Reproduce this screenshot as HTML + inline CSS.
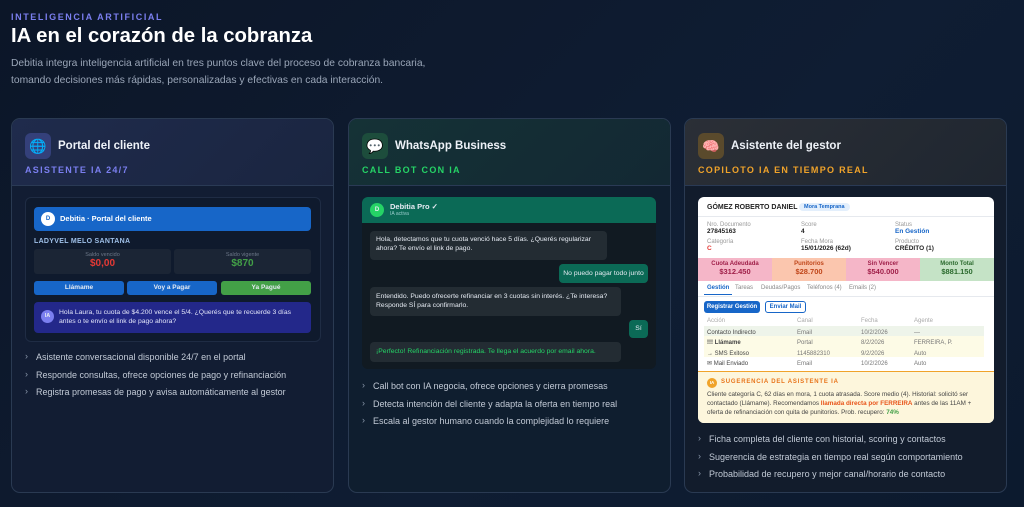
<!DOCTYPE html>
<html><head><meta charset="utf-8"><style>
*{box-sizing:border-box;margin:0;padding:0}
body{width:1024px;height:507px;overflow:hidden;background:linear-gradient(135deg,#0c1628,#0f1d33 60%,#0c1a2e);font-family:"Liberation Sans",sans-serif;color:#e6ebf3;position:relative}
.abs{position:absolute}
.kick{left:11px;top:12px;font-size:9px;letter-spacing:1.6px;font-weight:700;color:#7b7ff0}
h1{position:absolute;left:11px;top:25px;font-size:20.3px;font-weight:700;color:#fff}
.lead{left:11px;top:55px;font-size:10.3px;line-height:17px;color:#9aa6b8;width:470px}
.card{position:absolute;top:118px;width:323px;height:375px;border-radius:9px;border:1px solid #2a3a52;overflow:hidden;background:#111c30}
.head{height:67px;border-bottom:1px solid #2a3a55;position:relative}
.ic{position:absolute;left:13px;top:14px;width:26px;height:26px;border-radius:6px;font-size:14px;text-align:center;line-height:26px}
.tt{position:absolute;left:46px;top:21px;font-size:11.5px;font-weight:700;color:#eef2f8}
.sub{position:absolute;left:13px;top:46px;font-size:9px;font-weight:700;letter-spacing:1.3px}
ul{position:absolute;left:13px;list-style:none;font-size:9px;color:#c2cad6}
li{height:17.5px;position:relative;padding-left:11px}
li:before{content:"›";position:absolute;left:0;top:-1px;color:#8a97aa}
.box{position:absolute;border-radius:6px}
</style></head><body>
<div class="abs kick">INTELIGENCIA ARTIFICIAL</div>
<h1>IA en el corazón de la cobranza</h1>
<div class="abs lead">Debitia integra inteligencia artificial en tres puntos clave del proceso de cobranza bancaria,<br>tomando decisiones más rápidas, personalizadas y efectivas en cada interacción.</div>

<!-- card 1 -->
<div class="card" style="left:11px;background:#121d33">
 <div class="head" style="background:linear-gradient(135deg,#1f2b4c,#1a2540)">
  <div class="ic" style="background:#34407a">🌐</div>
  <div class="tt">Portal del cliente</div>
  <div class="sub" style="color:#7b7ff0">ASISTENTE IA 24/7</div>
 </div>
 <div class="box" style="left:13px;top:78px;width:296px;height:145px;border:1px solid #1f2c44;background:#0f1a2d">
  <div class="box" style="left:8px;top:9px;width:277px;height:24px;background:#1766c8;border-radius:4px">
   <div class="abs" style="left:7px;top:5px;width:14px;height:14px;border-radius:50%;background:#fff;color:#1766c8;font-size:6px;font-weight:700;text-align:center;line-height:14px">D</div>
   <div class="abs" style="left:26px;top:7px;font-size:7.5px;font-weight:700;color:#fff">Debitia · Portal del cliente</div>
  </div>
  <div class="abs" style="left:8px;top:40px;font-size:7px;font-weight:700;color:#9fc0e8;letter-spacing:.3px">LADYVEL MELO SANTANA</div>
  <div class="box" style="left:8px;top:51px;width:137px;height:25px;background:#1b2535;border-radius:3px;text-align:center"><div style="font-size:5.5px;color:#6d7889;margin-top:3px">Saldo vencido</div><div style="font-size:10px;font-weight:700;color:#e53935">$0,00</div></div>
  <div class="box" style="left:148px;top:51px;width:137px;height:25px;background:#1b2535;border-radius:3px;text-align:center"><div style="font-size:5.5px;color:#6d7889;margin-top:3px">Saldo vigente</div><div style="font-size:10px;font-weight:700;color:#43a047">$870</div></div>
  <div class="box" style="left:8px;top:83px;width:90px;height:14px;background:#1766c8;border-radius:3px;font-size:6.5px;font-weight:700;text-align:center;line-height:14px">Llámame</div>
  <div class="box" style="left:101px;top:83px;width:90px;height:14px;background:#1766c8;border-radius:3px;font-size:6.5px;font-weight:700;text-align:center;line-height:14px">Voy a Pagar</div>
  <div class="box" style="left:195px;top:83px;width:90px;height:14px;background:#43a047;border-radius:3px;font-size:6.5px;font-weight:700;text-align:center;line-height:14px">Ya Pagué</div>
  <div class="box" style="left:8px;top:104px;width:277px;height:31px;background:#23288a;border-radius:4px">
   <div class="abs" style="left:7px;top:8px;width:13px;height:13px;border-radius:50%;background:#7b7ff0;font-size:5.5px;font-weight:700;text-align:center;line-height:13px">IA</div>
   <div class="abs" style="left:25px;top:6px;width:248px;font-size:6.8px;line-height:9px;color:#e3e6fa">Hola Laura, tu cuota de $4.200 vence el 5/4. ¿Querés que te recuerde 3 días antes o te envío el link de pago ahora?</div>
  </div>
 </div>
 <ul style="top:233px"><li>Asistente conversacional disponible 24/7 en el portal</li><li>Responde consultas, ofrece opciones de pago y refinanciación</li><li>Registra promesas de pago y avisa automáticamente al gestor</li></ul>
</div>

<!-- card 2 -->
<div class="card" style="left:348px;background:#0f1e2f">
 <div class="head" style="background:linear-gradient(135deg,#153236,#132833)">
  <div class="ic" style="background:#1d4d3c">💬</div>
  <div class="tt">WhatsApp Business</div>
  <div class="sub" style="color:#25d366">CALL BOT CON IA</div>
 </div>
 <div class="box" style="left:13px;top:78px;width:294px;height:172px;background:#111a22;overflow:hidden">
  <div class="abs" style="left:0;top:0;width:294px;height:26px;background:#0b6a56"></div>
  <div class="abs" style="left:8px;top:6px;width:14px;height:14px;border-radius:50%;background:#25d366;font-size:6px;font-weight:700;text-align:center;line-height:14px">D</div>
  <div class="abs" style="left:28px;top:5px;font-size:7.5px;font-weight:700">Debitia Pro ✓</div>
  <div class="abs" style="left:28px;top:14px;font-size:5px;color:#9cc">IA activa</div>
  <div class="box" style="left:8px;top:34px;width:237px;height:29px;background:#232c33;font-size:6.8px;line-height:9px;padding:4px 6px;border-radius:4px">Hola, detectamos que tu cuota venció hace 5 días. ¿Querés regularizar ahora? Te envío el link de pago.</div>
  <div class="box" style="left:197px;top:67px;width:89px;height:19px;background:#0b6a56;font-size:6.8px;line-height:19px;text-align:center;border-radius:4px">No puedo pagar todo junto</div>
  <div class="box" style="left:8px;top:90px;width:251px;height:29px;background:#232c33;font-size:6.8px;line-height:9px;padding:5px 6px;border-radius:4px">Entendido. Puedo ofrecerte refinanciar en 3 cuotas sin interés. ¿Te interesa? Responde SÍ para confirmarlo.</div>
  <div class="box" style="left:267px;top:123px;width:19px;height:18px;background:#0b6a56;font-size:6.8px;line-height:18px;text-align:center;border-radius:4px">Sí</div>
  <div class="box" style="left:8px;top:145px;width:251px;height:20px;background:#232c33;font-size:6.8px;line-height:20px;padding:0 6px;color:#25d366;border-radius:4px">¡Perfecto! Refinanciación registrada. Te llega el acuerdo por email ahora.</div>
 </div>
 <ul style="top:262px"><li>Call bot con IA negocia, ofrece opciones y cierra promesas</li><li>Detecta intención del cliente y adapta la oferta en tiempo real</li><li>Escala al gestor humano cuando la complejidad lo requiere</li></ul>
</div>

<!-- card 3 -->
<div class="card" style="left:684px;background:#121c2c">
 <div class="head" style="background:linear-gradient(135deg,#2b2f36,#1f2630)">
  <div class="ic" style="background:#5a4a2c">🧠</div>
  <div class="tt">Asistente del gestor</div>
  <div class="sub" style="color:#f0a32a">COPILOTO IA EN TIEMPO REAL</div>
 </div>
 <div class="box" style="left:13px;top:78px;width:296px;height:226px;background:#fff;overflow:hidden;color:#333;font-size:6px">
  <div class="abs" style="left:9px;top:7px;font-size:7px;font-weight:700;color:#222">GÓMEZ ROBERTO DANIEL</div>
  <div class="abs" style="left:101px;top:6px;padding:1px 5px;background:#e3effc;color:#1766c8;font-size:5.5px;border-radius:6px;font-weight:700">Mora Temprana</div>
  <div class="abs" style="left:0;top:19px;width:296px;border-top:1px solid #e6e9ee"></div>
  <div class="abs" style="left:9px;top:25px;color:#999">Nro. Documento<br><b style="color:#222;font-size:6.5px">27845163</b></div>
  <div class="abs" style="left:103px;top:25px;color:#999">Score<br><b style="color:#222;font-size:6.5px">4</b></div>
  <div class="abs" style="left:197px;top:25px;color:#999">Status<br><b style="color:#1766c8;font-size:6.5px">En Gestión</b></div>
  <div class="abs" style="left:9px;top:42px;color:#999">Categoría<br><b style="color:#e53935;font-size:6.5px">C</b></div>
  <div class="abs" style="left:103px;top:42px;color:#999">Fecha Mora<br><b style="color:#222;font-size:6.5px">15/01/2026 (62d)</b></div>
  <div class="abs" style="left:197px;top:42px;color:#999">Producto<br><b style="color:#222;font-size:6.5px">CRÉDITO (1)</b></div>
  <div class="abs" style="left:0;top:61px;width:74px;height:23px;background:#f5b6c8;text-align:center;padding-top:3px;color:#a0204a;font-weight:700">Cuota Adeudada<br><span style="font-size:7.5px">$312.450</span></div>
  <div class="abs" style="left:74px;top:61px;width:74px;height:23px;background:#fbc6ae;text-align:center;padding-top:3px;color:#c0461a;font-weight:700">Punitorios<br><span style="font-size:7.5px">$28.700</span></div>
  <div class="abs" style="left:148px;top:61px;width:74px;height:23px;background:#f5b6c8;text-align:center;padding-top:3px;color:#a0204a;font-weight:700">Sin Vencer<br><span style="font-size:7.5px">$540.000</span></div>
  <div class="abs" style="left:222px;top:61px;width:74px;height:23px;background:#c5e3c6;text-align:center;padding-top:3px;color:#2b6a2e;font-weight:700">Monto Total<br><span style="font-size:7.5px">$881.150</span></div>
  <div class="abs" style="left:0;top:99px;width:296px;border-top:1px solid #e6e9ee"></div>
  <div class="abs" style="left:6px;top:88px;color:#1766c8;font-weight:700;border-bottom:1.5px solid #1766c8;padding:0 3px 3px">Gestión</div>
  <div class="abs" style="left:37px;top:88px;color:#888">Tareas</div>
  <div class="abs" style="left:63px;top:88px;color:#888">Deudas/Pagos</div>
  <div class="abs" style="left:109px;top:88px;color:#888">Teléfonos (4)</div>
  <div class="abs" style="left:151px;top:88px;color:#888">Emails (2)</div>
  <div class="abs" style="left:6px;top:104px;width:56px;height:12px;background:#1766c8;border-radius:3px;color:#fff;font-weight:700;text-align:center;line-height:12px">Registrar Gestión</div>
  <div class="abs" style="left:67px;top:104px;width:41px;height:12px;border:1px solid #1766c8;border-radius:3px;color:#1766c8;font-weight:700;text-align:center;line-height:10px">Enviar Mail</div>
  <div class="abs" style="left:9px;top:121px;color:#aaa">Acción</div><div class="abs" style="left:99px;top:121px;color:#aaa">Canal</div><div class="abs" style="left:163px;top:121px;color:#aaa">Fecha</div><div class="abs" style="left:216px;top:121px;color:#aaa">Agente</div>
  <div class="abs" style="left:6px;top:129px;width:280px;height:10px;background:#eef4ea"></div>
  <div class="abs" style="left:6px;top:139px;width:280px;height:21px;background:#fdfbe6"></div>
  <div class="abs" style="left:9px;top:131px;line-height:10.3px;color:#444">Contacto Indirecto<br><b>!!! Llámame</b><br>→ SMS Exitoso<br>✉ Mail Enviado</div>
  <div class="abs" style="left:99px;top:131px;line-height:10.3px;color:#777">Email<br>Portal<br>1145882310<br>Email</div>
  <div class="abs" style="left:163px;top:131px;line-height:10.3px;color:#777">10/2/2026<br>8/2/2026<br>9/2/2026<br>10/2/2026</div>
  <div class="abs" style="left:216px;top:131px;line-height:10.3px;color:#777">—<br>FERREIRA, P.<br>Auto<br>Auto</div>
  <div class="abs" style="left:0;top:174px;width:296px;height:52px;background:#fdf6dc;border-top:1.5px solid #f0a32a">
   <div class="abs" style="left:9px;top:6px;width:10px;height:10px;border-radius:50%;background:#f0a32a;color:#fff;font-size:4.5px;font-weight:700;text-align:center;line-height:10px">IA</div>
   <div class="abs" style="left:23px;top:7px;color:#e8741a;font-weight:700;letter-spacing:.8px">SUGERENCIA DEL ASISTENTE IA</div>
   <div class="abs" style="left:9px;top:18px;width:282px;font-size:6.3px;line-height:9px;color:#444">Cliente categoría C, 62 días en mora, 1 cuota atrasada. Score medio (4). Historial: solicitó ser contactado (Llámame). Recomendamos <b style="color:#e8541a">llamada directa por FERREIRA</b> antes de las 11AM + oferta de refinanciación con quita de punitorios. Prob. recupero: <b style="color:#43a047">74%</b></div>
  </div>
 </div>
 <ul style="top:315px"><li>Ficha completa del cliente con historial, scoring y contactos</li><li>Sugerencia de estrategia en tiempo real según comportamiento</li><li>Probabilidad de recupero y mejor canal/horario de contacto</li></ul>
</div>
</body></html>
